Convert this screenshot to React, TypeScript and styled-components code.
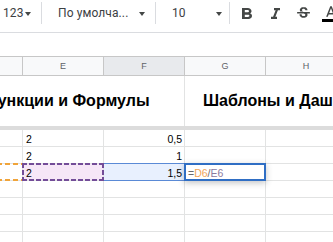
import React from 'react';
import styled, { createGlobalStyle, css } from 'styled-components';

const Global = createGlobalStyle`
  html, body { margin: 0; padding: 0; background: #ffffff; }
  body { font-family: Roboto, "Liberation Sans", Arial, sans-serif; }
`;

const Page = styled.div`
  width: 333px;
  height: 242px;
  overflow: hidden;
  background: #ffffff;
`;

/* ---------- toolbar ---------- */
const Toolbar = styled.div`
  height: 33px;
  box-sizing: border-box;
  padding-bottom: 6px;
  border-bottom: 1px solid #dadce0;
  display: flex;
  align-items: center;
  color: #444746;
  font-size: 12px;
  white-space: nowrap;
  overflow: hidden;
`;

const Select = styled.div<{ $w: number; $pl: number; $pr: number }>`
  width: ${p => p.$w}px;
  flex: none;
  box-sizing: border-box;
  padding-left: ${p => p.$pl}px;
  padding-right: ${p => p.$pr}px;
  display: flex;
  align-items: center;
  height: 26px;
`;

const SelectLabel = styled.span`
  font-family: Roboto, "Liberation Sans", sans-serif;
  font-size: 12px;
  color: #3c4043;
  letter-spacing: 0.1px;
`;

const Caret = styled.span<{ $push?: boolean }>`
  width: 0;
  height: 0;
  margin-left: ${p => (p.$push ? 'auto' : '1px')};
  margin-top: 1px;
  border-left: 3.5px solid transparent;
  border-right: 3.5px solid transparent;
  border-top: 4px solid #444746;
`;

const Separator = styled.div`
  width: 1px;
  height: 22px;
  background: #dadce0;
  flex: none;
`;

const IconButton = styled.div<{ $first?: boolean }>`
  width: 28px;
  height: 26px;
  flex: none;
  margin-left: ${p => (p.$first ? '3px' : '0')};
  display: flex;
  align-items: center;
  justify-content: center;
  color: #444746;
`;

const BoldIcon = () => (
  <svg width="10" height="11" viewBox="7 4 10.75 14" preserveAspectRatio="none" fill="currentColor">
    <path d="M15.6 10.79c.97-.67 1.65-1.77 1.65-2.79 0-2.26-1.75-4-4-4H7v14h7.04c2.09 0 3.71-1.7 3.71-3.790 0-1.52-.86-2.82-2.15-3.42zM10 6.5h3c.83 0 1.5.67 1.5 1.5s-.67 1.5-1.5 1.5h-3v-3zm3.5 9H10v-3h3.5c.83 0 1.5.67 1.5 1.5s-.67 1.5-1.5 1.5z" />
  </svg>
);

const ItalicIcon = () => (
  <svg width="9" height="11" viewBox="6 4 12 14" preserveAspectRatio="none" fill="currentColor">
    <path d="M10 4v3h2.21l-3.42 8H6v3h8v-3h-2.21l3.42-8H18V4z" />
  </svg>
);

const StrikeIcon = () => (
  <svg width="17" height="17" viewBox="0 0 24 24" fill="currentColor">
    <path d="M7.24 8.75c-.26-.48-.39-1.03-.39-1.67 0-.61.13-1.16.4-1.67.26-.5.63-.93 1.11-1.29.48-.35 1.05-.63 1.7-.83.66-.19 1.39-.29 2.18-.29.81 0 1.54.11 2.21.34.66.22 1.23.54 1.69.94.47.4.83.88 1.08 1.43.25.55.38 1.15.38 1.81h-3.01c0-.31-.05-.59-.15-.85-.09-.27-.24-.49-.44-.68-.2-.19-.45-.33-.75-.44-.3-.1-.66-.16-1.06-.16-.39 0-.74.04-1.03.13-.29.09-.53.21-.72.36-.19.16-.34.34-.44.55-.1.21-.15.43-.15.66 0 .48.25.88.74 1.21.38.25.77.48 1.41.7H7.39c-.05-.08-.11-.17-.15-.25zM21 12v-2H3v2h9.62c.18.07.4.14.55.2.37.17.66.34.87.51.21.17.35.36.43.57.07.2.11.43.11.69 0 .23-.05.45-.14.66-.09.2-.23.38-.42.53-.19.15-.42.26-.71.35-.29.08-.63.13-1.01.13-.43 0-.83-.04-1.18-.13s-.66-.23-.91-.42c-.25-.19-.45-.44-.59-.75-.14-.31-.25-.76-.25-1.21H6.4c0 .55.08 1.13.24 1.58.16.45.37.85.65 1.21.28.35.6.66.98.92.37.26.78.48 1.22.65.44.17.9.3 1.38.39.48.08.96.13 1.44.13.8 0 1.53-.09 2.18-.28s1.21-.45 1.67-.79c.46-.34.82-.77 1.07-1.27s.38-1.07.38-1.71c0-.6-.1-1.14-.31-1.61-.05-.11-.11-.23-.17-.33H21z" />
  </svg>
);

const TextColorIcon = () => (
  <svg width="18" height="18" viewBox="0 0 24 24">
    <path fill="#444746" d="M11 3L5.5 17h2.25l1.12-3h6.25l1.12 3h2.25L13 3h-2zm-1.38 9L12 5.67 14.38 12H9.62z" />
    <path fill="#000000" d="M0 20h24v4H0z" />
  </svg>
);

const Spacer = styled.div`
  height: 23px;
`;

/* ---------- grid ---------- */
const Sheet = styled.div`
  margin-left: -58px;
  width: 500px;
`;

const Row = styled.div<{ $h: number; $top?: boolean }>`
  display: flex;
  height: ${p => p.$h}px;
  box-sizing: border-box;
  ${p => p.$top && css`border-top: 1px solid #c7c7c7;`}
`;

const HeaderCell = styled.div<{ $active?: boolean }>`
  width: 81px;
  flex: none;
  box-sizing: border-box;
  border-right: 1px solid #c7c7c7;
  border-bottom: 1px solid #c7c7c7;
  background: ${p => (p.$active ? '#e8eaed' : '#f8f9fa')};
  color: #5f6368;
  font-family: "Liberation Sans", Arial, sans-serif;
  font-size: 9px;
  display: flex;
  align-items: center;
  justify-content: center;
`;

const TitleCell = styled.div<{ $span: number; $pl: number }>`
  width: ${p => p.$span * 81}px;
  flex: none;
  box-sizing: border-box;
  border-right: 1px solid #e2e3e3;
  display: flex;
  align-items: center;
  padding-left: ${p => p.$pl}px;
  font-family: "Liberation Sans", Arial, sans-serif;
  font-weight: 700;
  font-size: 16px;
  color: #000000;
  white-space: nowrap;
  overflow: hidden;
`;

const FreezeBand = styled.div`
  height: 4px;
  background: #dcdcdc;
`;

type Mark = 'ref1' | 'ref2' | 'range' | 'editor' | undefined;

const Cell = styled.div<{ $right?: boolean; $mark?: Mark }>`
  position: relative;
  width: 81px;
  flex: none;
  box-sizing: border-box;
  border-right: 1px solid #e2e3e3;
  border-bottom: 1px solid #e2e3e3;
  display: flex;
  align-items: center;
  justify-content: ${p => (p.$right ? 'flex-end' : 'flex-start')};
  padding: 1px 2px 0 3px;
  font-family: "Liberation Sans", Arial, sans-serif;
  font-size: 10.5px;
  color: #000000;
  white-space: nowrap;

  ${p =>
    p.$mark === 'ref1' &&
    css`
      &::after {
        content: '';
        position: absolute;
        left: -1px;
        right: -1px;
        top: -1px;
        bottom: -1px;
        background:
          repeating-linear-gradient(90deg, #f0a43a 0 5px, transparent 5px 8px) left top / 100% 2px no-repeat,
          repeating-linear-gradient(90deg, #f0a43a 0 5px, transparent 5px 8px) left bottom / 100% 2px no-repeat;
      }
    `}

  ${p =>
    p.$mark === 'ref2' &&
    css`
      background: #f6e7f7;
      &::after {
        content: '';
        position: absolute;
        left: -1px;
        right: -1px;
        top: -1px;
        bottom: -1px;
        background:
          repeating-linear-gradient(90deg, #734d98 0 5px, transparent 5px 7px) left top / 100% 2px no-repeat,
          repeating-linear-gradient(90deg, #734d98 0 5px, transparent 5px 7px) left bottom / 100% 2px no-repeat,
          repeating-linear-gradient(180deg, #734d98 0 5px, transparent 5px 7px) left top / 2px 100% no-repeat,
          repeating-linear-gradient(180deg, #734d98 0 5px, transparent 5px 7px) right top / 2px 100% no-repeat;
      }
    `}

  ${p =>
    p.$mark === 'range' &&
    css`
      background: #e8f0fe;
      &::after {
        content: '';
        position: absolute;
        left: 0;
        right: 0;
        top: -1px;
        bottom: -1px;
        border-top: 1px solid #5a8ad6;
        border-bottom: 1px solid #5a8ad6;
      }
    `}

  ${p =>
    p.$mark === 'editor' &&
    css`
      z-index: 2;
      &::after {
        content: '';
        position: absolute;
        left: -1px;
        right: -1px;
        top: -1px;
        bottom: -1px;
        border: 2px solid #2f6ec4;
        box-shadow: 0 2px 6px rgba(60, 64, 67, 0.3);
      }
    `}
`;

const Formula = styled.span`
  color: #6b6b6b;
`;

const RefText = styled.span<{ $c: string }>`
  color: ${p => p.$c};
`;

type RowData = { e?: string; f?: string; sel?: boolean };

const rows: RowData[] = [
  { e: '2', f: '0,5' },
  { e: '2', f: '1' },
  { e: '2', f: '1,5', sel: true },
  {},
  {},
  {},
  {},
];

export default function App() {
  return (
    <Page>
      <Global />
      <Toolbar>
        <Select $w={41} $pl={3} $pr={0}>
          <SelectLabel>123</SelectLabel>
          <Caret />
        </Select>
        <Separator />
        <Select $w={113} $pl={16} $pr={10}>
          <SelectLabel>По умолча...</SelectLabel>
          <Caret $push />
        </Select>
        <Separator />
        <Select $w={73} $pl={16} $pr={7}>
          <SelectLabel>10</SelectLabel>
          <Caret $push />
        </Select>
        <Separator />
        <IconButton $first>
          <BoldIcon />
        </IconButton>
        <IconButton>
          <ItalicIcon />
        </IconButton>
        <IconButton>
          <StrikeIcon />
        </IconButton>
        <IconButton>
          <TextColorIcon />
        </IconButton>
      </Toolbar>
      <Spacer />
      <Sheet>
        <Row $h={20} $top>
          <HeaderCell>D</HeaderCell>
          <HeaderCell>E</HeaderCell>
          <HeaderCell $active>F</HeaderCell>
          <HeaderCell>G</HeaderCell>
          <HeaderCell>H</HeaderCell>
        </Row>
        <Row $h={50}>
          <TitleCell $span={3} $pl={42}>Функции и Формулы</TitleCell>
          <TitleCell $span={3} $pl={18}>Шаблоны и Дашборды</TitleCell>
        </Row>
        <FreezeBand />
        {rows.map((r, i) => (
          <Row key={i} $h={17}>
            <Cell $mark={r.sel ? 'ref1' : undefined} />
            <Cell $mark={r.sel ? 'ref2' : undefined}>{r.e}</Cell>
            <Cell $right $mark={r.sel ? 'range' : undefined}>{r.f}</Cell>
            <Cell $mark={r.sel ? 'editor' : undefined}>
              {r.sel && (
                <Formula>
                  =<RefText $c="#f2a55a">D6</RefText>/<RefText $c="#8b7a9e">E6</RefText>
                </Formula>
              )}
            </Cell>
            <Cell />
          </Row>
        ))}
      </Sheet>
    </Page>
  );
}
